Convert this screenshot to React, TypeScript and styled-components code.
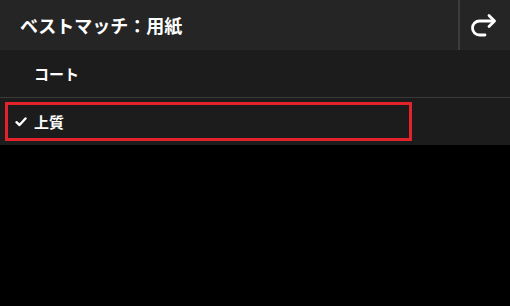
import styled, { createGlobalStyle } from "styled-components";

const GlobalStyle = createGlobalStyle`
    html, body {
        margin: 0;
        padding: 0;
        background: #000;
    }
    body {
        width: 510px;
        height: 306px;
        overflow: hidden;
        font-family: "Noto Sans CJK JP", "Noto Sans", sans-serif;
    }
`;

const Screen = styled.div`
    width: 510px;
    height: 306px;
    background: #000;
    display: flex;
    flex-direction: column;
`;

const Header = styled.header`
    height: 50px;
    background: #252525;
    display: flex;
    align-items: stretch;
`;

const Title = styled.h1`
    flex: 1;
    margin: 0;
    padding-left: 20px;
    display: flex;
    align-items: center;
    color: #fff;
    font-size: 18px;
    font-weight: 700;
`;

const BackButton = styled.button`
    width: 52px;
    border: none;
    border-left: 2px solid #3c3c3c;
    background: transparent;
    display: flex;
    align-items: center;
    justify-content: center;
    padding: 0;
    cursor: pointer;
`;

const List = styled.ul`
    list-style: none;
    margin: 0;
    padding: 0;
    background: #1c1c1c;
`;

const Item = styled.li<{ $divider?: boolean }>`
    height: 47px;
    display: flex;
    align-items: center;
    border-bottom: ${(p) => (p.$divider ? "1px solid #3a3a3a" : "none")};
    padding: 0 5px;
`;

const ItemBox = styled.div<{ $selected?: boolean }>`
    width: 407px;
    height: 39px;
    box-sizing: border-box;
    border: 3px solid ${(p) => (p.$selected ? "#e3222c" : "transparent")};
    display: flex;
    align-items: center;
`;

const Check = styled.span`
    width: 26px;
    display: flex;
    justify-content: center;
`;

const Label = styled.span`
    color: #fff;
    font-size: 15px;
    font-weight: 700;
`;

function RedoIcon() {
    return (
        <svg width="28" height="24" viewBox="0 0 28 24" fill="none">
            <path
                d="M23 8 H8.5 a7 7 0 0 0 0 14 H14"
                stroke="#fff"
                strokeWidth="2.8"
                strokeLinecap="round"
                strokeLinejoin="round"
            />
            <path
                d="M18 2.5 L23.5 8 L18 13.5"
                stroke="#fff"
                strokeWidth="2.8"
                strokeLinecap="round"
                strokeLinejoin="round"
            />
        </svg>
    );
}

function CheckIcon() {
    return (
        <svg width="12" height="10" viewBox="0 0 12 10">
            <path d="M1.5 5.2 L4.5 8 L10.5 1.5" stroke="#fff" strokeWidth="2.4" fill="none" strokeLinecap="round" strokeLinejoin="round" />
        </svg>
    );
}

export default function App() {
    return (
        <Screen>
            <GlobalStyle />
            <Header>
                <Title>ベストマッチ：用紙</Title>
                <BackButton aria-label="戻る">
                    <RedoIcon />
                </BackButton>
            </Header>
            <List>
                <Item $divider>
                    <ItemBox>
                        <Check />
                        <Label>コート</Label>
                    </ItemBox>
                </Item>
                <Item>
                    <ItemBox $selected>
                        <Check>
                            <CheckIcon />
                        </Check>
                        <Label>上質</Label>
                    </ItemBox>
                </Item>
            </List>
        </Screen>
    );
}
